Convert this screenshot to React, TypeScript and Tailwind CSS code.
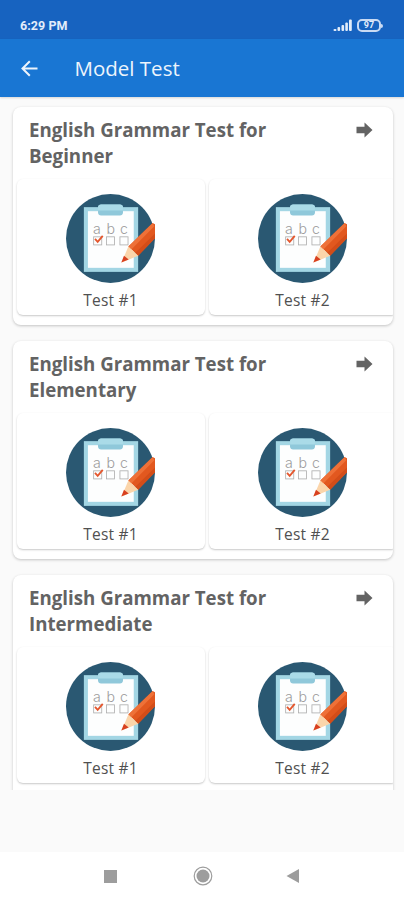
import { memo } from "react"

const sections = [
    { level: "Beginner", tests: ["Test #1", "Test #2"] },
    { level: "Elementary", tests: ["Test #1", "Test #2"] },
    { level: "Intermediate", tests: ["Test #1", "Test #2"] },
]

const ClipboardIcon = () => (
    <svg viewBox="50 28 264 264" className="h-[89px] w-[89px] shrink-0">
        <circle cx="182" cy="160" r="132" fill="#2a5872" />
        <rect x="103" y="67" width="161" height="192" fill="#a3d6e4" />
        <rect x="115" y="79" width="136" height="168" fill="#fdfefe" />
        <path d="M145 67c0-5 4-8 9-8h56c5 0 9 3 9 8v16c0 5-4 9-9 9h-56c-5 0-9-4-9-9z" fill="#8fc8da" />
        <path d="M145 67c0-5 4-8 9-8h56c5 0 9 3 9 8v10h-74z" fill="#aadbe8" />
        <g fill="#9c9c9c" fontFamily="Inter, sans-serif" fontSize="42" fontWeight="300" textAnchor="middle">
            <text x="142" y="147">a</text>
            <text x="183" y="147">b</text>
            <text x="222" y="147">c</text>
        </g>
        <g fill="none" stroke="#b0b0b0" strokeWidth="2.5">
            <rect x="132" y="155" width="24" height="24" />
            <rect x="170" y="155" width="24" height="24" />
            <rect x="210" y="155" width="24" height="24" />
        </g>
        <path d="M136 161l8 9 15-18" fill="none" stroke="#e4572e" strokeWidth="5.5" />
        <path d="M235 184L307 114 314 118V159L264 211z" fill="#e2581f" />
        <path d="M235 184L307 114 312 124 243 193z" fill="#ee7138" />
        <path d="M255 203L314 145V159L264 211z" fill="#d34d19" />
        <path d="M235 184l29 27-49 20z" fill="#fbd5aa" />
        <path d="M222 211l14 11-22 9z" fill="#d8401f" />
    </svg>
)

const StatusBar = () => (
    <div className="flex h-[39px] items-end justify-between bg-[#1763c0] pr-[21px] pb-[5px] pl-5 text-[#e3edfa]">
        <span className="font-[Roboto] text-[12.5px] leading-4 font-bold tracking-[0.05px]">6:29 PM</span>
        <div className="mb-0.5 flex items-end gap-1">
            <svg viewBox="0 0 20 13" className="h-[13px] w-5" fill="currentColor">
                <rect x="0.5" y="10" width="3" height="2" rx="1" />
                <rect x="4.5" y="8" width="2.6" height="4" rx="1" />
                <rect x="8.5" y="6" width="2.6" height="6" rx="1" />
                <rect x="12.3" y="3.5" width="2.6" height="8.5" rx="1" />
                <rect x="16" y="0.5" width="2.8" height="11.5" rx="1" />
            </svg>
            <div className="flex items-center">
                <span className="flex h-[13px] w-6 items-center justify-center rounded-[5px] border-2 border-[#c9daf3] font-[Roboto] text-[9px] leading-none font-bold">
                    97
                </span>
                <span className="h-1 w-[2px] rounded-r bg-[#c9daf3]" />
            </div>
        </div>
    </div>
)

const AppBar = () => (
    <header className="flex h-[58px] items-center bg-[#1976d3] pl-[21px] text-[#edf4fc] shadow-[0_1px_2px_rgba(0,0,0,0.15)]">
        <svg viewBox="0 0 17 17" className="h-[17px] w-[17px]" fill="none" stroke="currentColor" strokeWidth="2">
            <path d="M16.5 8.5H1.5M8.8 1.2L1.5 8.5l7.3 7.3" />
        </svg>
        <h1 className="mt-px ml-[36.5px] text-[20.5px] leading-none">Model Test</h1>
    </header>
)

const TestCard = memo(({ label }: { label: string }) => (
    <div className="flex h-[136px] w-[188px] shrink-0 flex-col items-center rounded-md bg-white pt-[15px] pr-[1px] shadow-[0_1px_2px_rgba(0,0,0,0.22)]">
        <ClipboardIcon />
        <span className="mt-[7px] text-[15.5px] leading-5 tracking-[0.2px] text-[#505050]">{label}</span>
    </div>
))

TestCard.displayName = "TestCard"

const TestSection = memo(({ level, tests }: { level: string; tests: string[] }) => (
    <section className="h-[218px] shrink-0 rounded-lg bg-white shadow-[0_1px_3px_rgba(0,0,0,0.22)] last:h-[230px]">
        <div className="flex h-[70px] items-start justify-between pt-[10px] pr-5 pl-4">
            <h2 className="w-[250px] text-[18.7px] leading-[25.5px] font-bold text-[#636363]">
                English Grammar Test for {level}
            </h2>
            <svg viewBox="0 0 17 16" className="mt-[5px] h-4 w-[17px]" fill="#636363">
                <path d="M0.5 4.8H8.5V0.5L16.5 8 8.5 15.5V11.2H0.5z" />
            </svg>
        </div>
        <div className="flex gap-1 overflow-hidden pt-[2px] pb-1 pl-1">
            {tests.map((label) => (
                <TestCard key={label} label={label} />
            ))}
        </div>
    </section>
))

TestSection.displayName = "TestSection"

const NavigationBar = () => (
    <nav className="flex h-12 items-center bg-white pl-[104px]">
        <div className="h-[13px] w-[13px] bg-[#9d9d9d]" />
        <svg viewBox="0 0 20 20" className="ml-[76px] h-5 w-5">
            <circle cx="10" cy="10" r="8.8" fill="none" stroke="#9d9d9d" strokeWidth="1.2" />
            <circle cx="10" cy="10" r="6.5" fill="#9d9d9d" />
        </svg>
        <svg viewBox="0 0 13 14" className="ml-[73px] h-[14px] w-[13px]">
            <path d="M13 0v14L0.5 7z" fill="#9d9d9d" />
        </svg>
    </nav>
)

export default function App() {
    return (
        <div className="flex h-[900px] w-[404px] flex-col overflow-hidden bg-[#fafafa] font-['Open_Sans',sans-serif]">
            <StatusBar />
            <AppBar />
            <main className="flex h-[693px] flex-col gap-4 overflow-hidden pt-[10px] pr-[11px] pl-[13px]">
                {sections.map((section) => (
                    <TestSection key={section.level} level={section.level} tests={section.tests} />
                ))}
            </main>
            <div className="mt-auto">
                <NavigationBar />
            </div>
        </div>
    )
}
